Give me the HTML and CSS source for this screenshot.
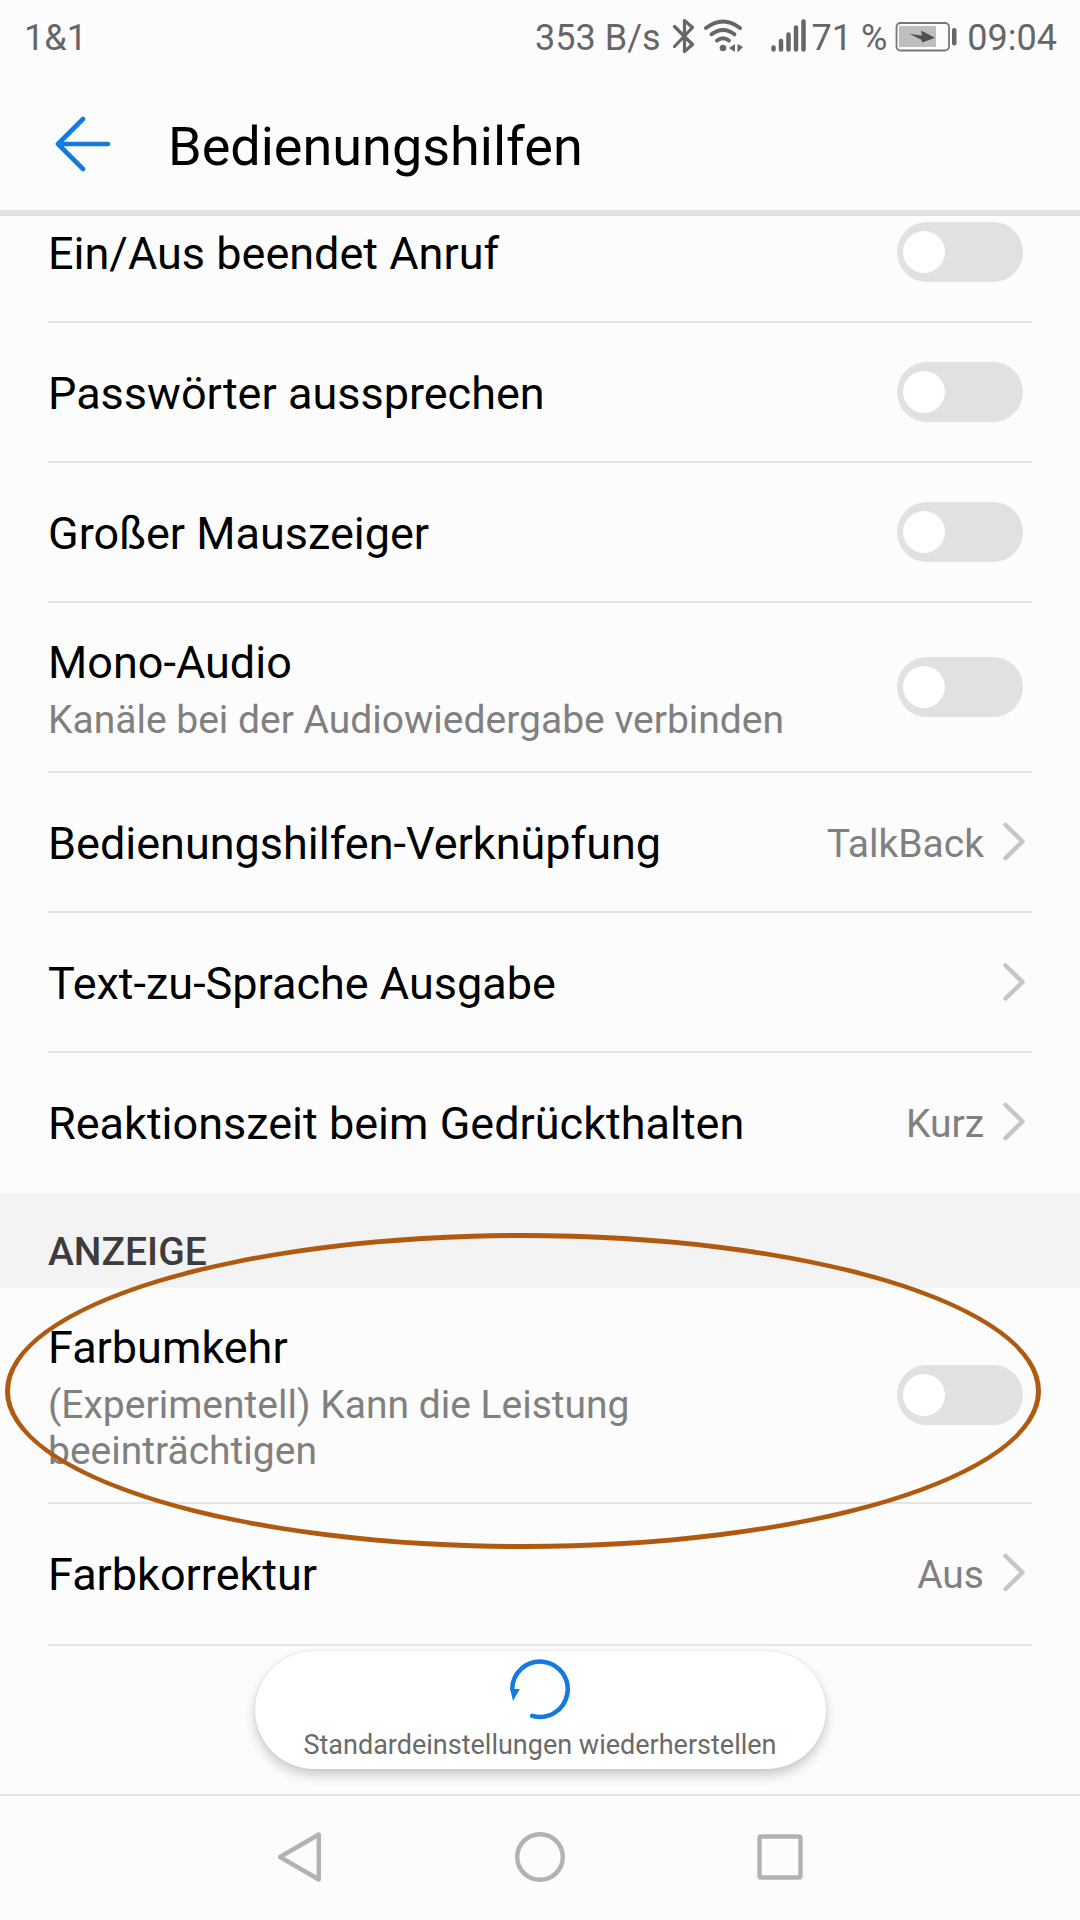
FILE: index.html
```html
<!DOCTYPE html>
<html lang="de">
<head>
    <meta charset="UTF-8">
    <meta name="viewport" content="width=device-width, initial-scale=1.0">
    <title>Bedienungshilfen</title>
    <link rel="stylesheet" href="styles.css">
</head>
<body>
    <div class="status-bar">
        <span class="carrier">1&amp;1</span>
        <div class="status-icons">
            <span class="speed">353 B/s</span>
            <svg class="bluetooth" width="24" height="36" viewBox="0 0 24 36">
                <path d="M2.5 8.5 L20.5 26.5 L12.5 33.5 V2.5 L20.5 9.5 L2.5 28.5" fill="none" stroke="#666" stroke-width="3.2" stroke-linecap="round" stroke-linejoin="round"/>
            </svg>
            <svg class="wifi" width="40" height="36" viewBox="0 0 40 36">
                <g fill="none" stroke="#666" stroke-width="3.9" stroke-linecap="round">
                    <path d="M2 10 Q19 -3 36 10"/>
                    <path d="M7.5 16.3 Q19 7.5 30.5 16.3"/>
                    <path d="M13 22.5 Q19 18 25 22.5"/>
                </g>
                <circle cx="19" cy="30" r="3.3" fill="#666"/>
                <path d="M31 26 V34 L25 30 Z M33.5 26 V34.5 L39 29 Z" fill="#666"/>
            </svg>
            <svg class="signal" width="37" height="36" viewBox="0 0 37 36">
                <path d="M3.5 29.5 V31.5 M11 23 V31.5 M18.5 16.5 V31.5 M26 9.5 V31.5 M33.5 3.5 V31.5" stroke="#666" stroke-width="4.5" stroke-linecap="round"/>
            </svg>
            <span class="percent">71 %</span>
            <svg class="battery" width="62" height="36" viewBox="0 0 62 36">
                <rect x="1.5" y="5" width="52.5" height="27.5" rx="4" fill="none" stroke="#777" stroke-width="1.8"/>
                <rect x="4" y="8" width="37" height="21" fill="#bebebe"/>
                <path d="M14.5 16 L27 17.5 L26 12.500 L40 19.800 L27.500 24.500 L26 21.500 Z" fill="#4f4f4f"/>
                <rect x="57" y="10" width="4.500" height="17.500" rx="2" fill="#666"/>
            </svg>
            <span class="clock">09:04</span>
        </div>
    </div>

    <div class="header">
        <svg class="back" width="56" height="56" viewBox="0 0 56 56">
            <path d="M28 3 L3 28 L28 53 M3 28 H53" fill="none" stroke="#137adf" stroke-width="4.6" stroke-linecap="round" stroke-linejoin="round"/>
        </svg>
        <h1>Bedienungshilfen</h1>
    </div>

    <div class="settings">
        <div class="row first">
            <div class="label">Ein/Aus beendet Anruf</div>
            <div class="switch"></div>
        </div>
        <div class="row">
            <div class="label">Passwörter aussprechen</div>
            <div class="switch"></div>
        </div>
        <div class="row">
            <div class="label">Großer Mauszeiger</div>
            <div class="switch"></div>
        </div>
        <div class="row double">
            <div class="text">
                <div class="label">Mono-Audio</div>
                <div class="summary">Kanäle bei der Audiowiedergabe verbinden</div>
            </div>
            <div class="switch"></div>
        </div>
        <div class="row">
            <div class="label">Bedienungshilfen-Verknüpfung</div>
            <div class="value">TalkBack</div>
            <svg class="chevron" width="24" height="40" viewBox="0 0 24 40"><path d="M3.5 3 L20.5 19.5 L3.5 36"/></svg>
        </div>
        <div class="row">
            <div class="label">Text-zu-Sprache Ausgabe</div>
            <svg class="chevron" width="24" height="40" viewBox="0 0 24 40"><path d="M3.5 3.5 L20.5 20 L3.5 36.5"/></svg>
        </div>
        <div class="row last">
            <div class="label">Reaktionszeit beim Gedrückthalten</div>
            <div class="value">Kurz</div>
            <svg class="chevron" width="24" height="40" viewBox="0 0 24 40"><path d="M3.5 3 L20.5 19.5 L3.5 36"/></svg>
        </div>

        <h2 class="section">ANZEIGE</h2>

        <div class="row triple">
            <div class="text">
                <div class="label">Farbumkehr</div>
                <div class="summary">(Experimentell) Kann die Leistung<br>beeinträchtigen</div>
            </div>
            <div class="switch"></div>
        </div>
        <div class="row tall">
            <div class="label">Farbkorrektur</div>
            <div class="value">Aus</div>
            <svg class="chevron" width="24" height="40" viewBox="0 0 24 40"><path d="M3.5 3 L20.5 19.5 L3.5 36"/></svg>
        </div>

        <!-- marker around the Farbumkehr entry -->
        <div class="marker"></div>
    </div>

    <div class="bottom">
        <button class="restore">
            <svg width="64" height="64" viewBox="0 0 64 64">
                <path d="M24.2 58.8 A27.7 27.7 0 1 0 4.3 32" fill="none" stroke="#137adf" stroke-width="4.5" stroke-linecap="round"/>
                <path d="M2.2 32 H11.8 L5 44 Z" fill="#137adf"/>
            </svg>
            <span>Standardeinstellungen wiederherstellen</span>
        </button>
    </div>

    <div class="nav-bar">
        <svg width="54" height="54" viewBox="0 0 54 54"><path d="M45.8 4.500 V49.500 L7 27 Z"/></svg>
        <svg width="54" height="54" viewBox="0 0 54 54"><circle cx="27" cy="27" r="22.8"/></svg>
        <svg width="54" height="54" viewBox="0 0 54 54"><rect x="6.5" y="6.5" width="41" height="41" rx="1.5"/></svg>
    </div>
</body>
</html>
```
FILE: styles.css
```css
* {
    box-sizing: border-box;
}

body {
    margin: 0;
    width: 1080px;
    height: 1920px;
    display: flex;
    flex-direction: column;
    overflow: hidden;
    background-color: #fcfcfc;
    color: #000;
    font-family: Roboto, "Liberation Sans", sans-serif;
}

.status-bar {
    height: 72px;
    padding: 0 24px;
    display: flex;
    justify-content: space-between;
    align-items: center;
    font-size: 36px;
    color: #666;
}

.status-icons {
    display: flex;
    align-items: center;
    white-space: pre;
}

.carrier, .speed, .percent, .clock {
    line-height: 42px;
    padding-top: 4px;
}

.bluetooth {
    margin-left: 11px;
}
.wifi {
    margin-left: 8px;
}
.signal {
    margin-left: 26px;
}
.percent {
    margin-left: 5px;
}
.battery {
    margin: 0 10px 0 8px;
}
.clock {
    margin-right: -1px;
}

.header {
    height: 144px;
    padding-left: 55px;
    display: flex;
    align-items: center;
    border-bottom: 6px solid #e1e1e1;
}

.back {
    margin-top: 6px;
}

.header h1 {
    margin: 12px 0 0 57px;
    font-size: 54px;
    font-weight: 400;
    line-height: 64px;
}

.settings {
    position: relative;
    height: 1434px;
}

.row {
    height: 140px;
    margin: 0 48px;
    padding-right: 9px;
    display: flex;
    align-items: center;
    border-bottom: 2px solid #e4e4e4;
}
.row.first {
    height: 107px;
    padding-bottom: 33px;
}
.row.double {
    height: 170px;
}
.row.triple {
    height: 216px;
}
.row.tall {
    height: 142px;
    padding-bottom: 2px;
}
.row.last {
    border-bottom-color: transparent;
}

.label {
    flex: 1;
    padding-top: 2px;
    font-size: 45px;
    line-height: 53px;
    white-space: nowrap;
}

.text {
    flex: 1;
    padding-top: 3px;
}

.summary {
    margin-top: 8px;
    font-size: 39px;
    line-height: 46px;
    color: #808080;
}

.value {
    padding-top: 4px;
    margin-right: 18px;
    font-size: 39px;
    color: #808080;
}

.chevron {
    margin-right: -3px;
}
.chevron path {
    fill: none;
    stroke: #c6c6c6;
    stroke-width: 4.5;
    stroke-linecap: round;
    stroke-linejoin: round;
}

.switch {
    width: 126px;
    height: 60px;
    padding: 9px 6px;
    border-radius: 30px;
    background-color: #e1e1e1;
}
.switch::before {
    content: "";
    display: block;
    width: 42px;
    height: 42px;
    border-radius: 50%;
    background-color: #fff;
}

.section {
    height: 95px;
    margin: 0;
    padding: 36px 48px 0;
    background-color: #f3f3f3;
    color: #3c3c3c;
    font-size: 39px;
    font-weight: 500;
    line-height: 46px;
}

.marker {
    position: absolute;
    left: 5px;
    top: 1017px;
    width: 1036px;
    height: 316px;
    border: 5px solid #b05a10;
    border-radius: 50%;
}

.bottom {
    height: 144px;
    display: flex;
    justify-content: center;
    align-items: flex-start;
}

.restore {
    width: 571px;
    height: 118px;
    margin: 1px 0 0;
    padding: 6px 0 0;
    display: flex;
    flex-direction: column;
    align-items: center;
    justify-content: flex-start;
    border: none;
    border-radius: 59px;
    background-color: #fff;
    box-shadow: 0 6px 12px rgba(0, 0, 0, 0.2), 0 0 2px rgba(0, 0, 0, 0.12);
    font-family: inherit;
    font-size: 27px;
    line-height: 32px;
    color: #6a6a6a;
}
.restore svg {
    flex-shrink: 0;
}
.restore span {
    margin-top: 8px;
}

.nav-bar {
    height: 126px;
    padding-bottom: 2px;
    display: flex;
    justify-content: center;
    align-items: center;
    gap: 186px;
    border-top: 2px solid #e1e1e1;
}
.nav-bar svg {
    fill: none;
    stroke: #b2b2b2;
    stroke-width: 4.4;
    stroke-linejoin: round;
}
```
